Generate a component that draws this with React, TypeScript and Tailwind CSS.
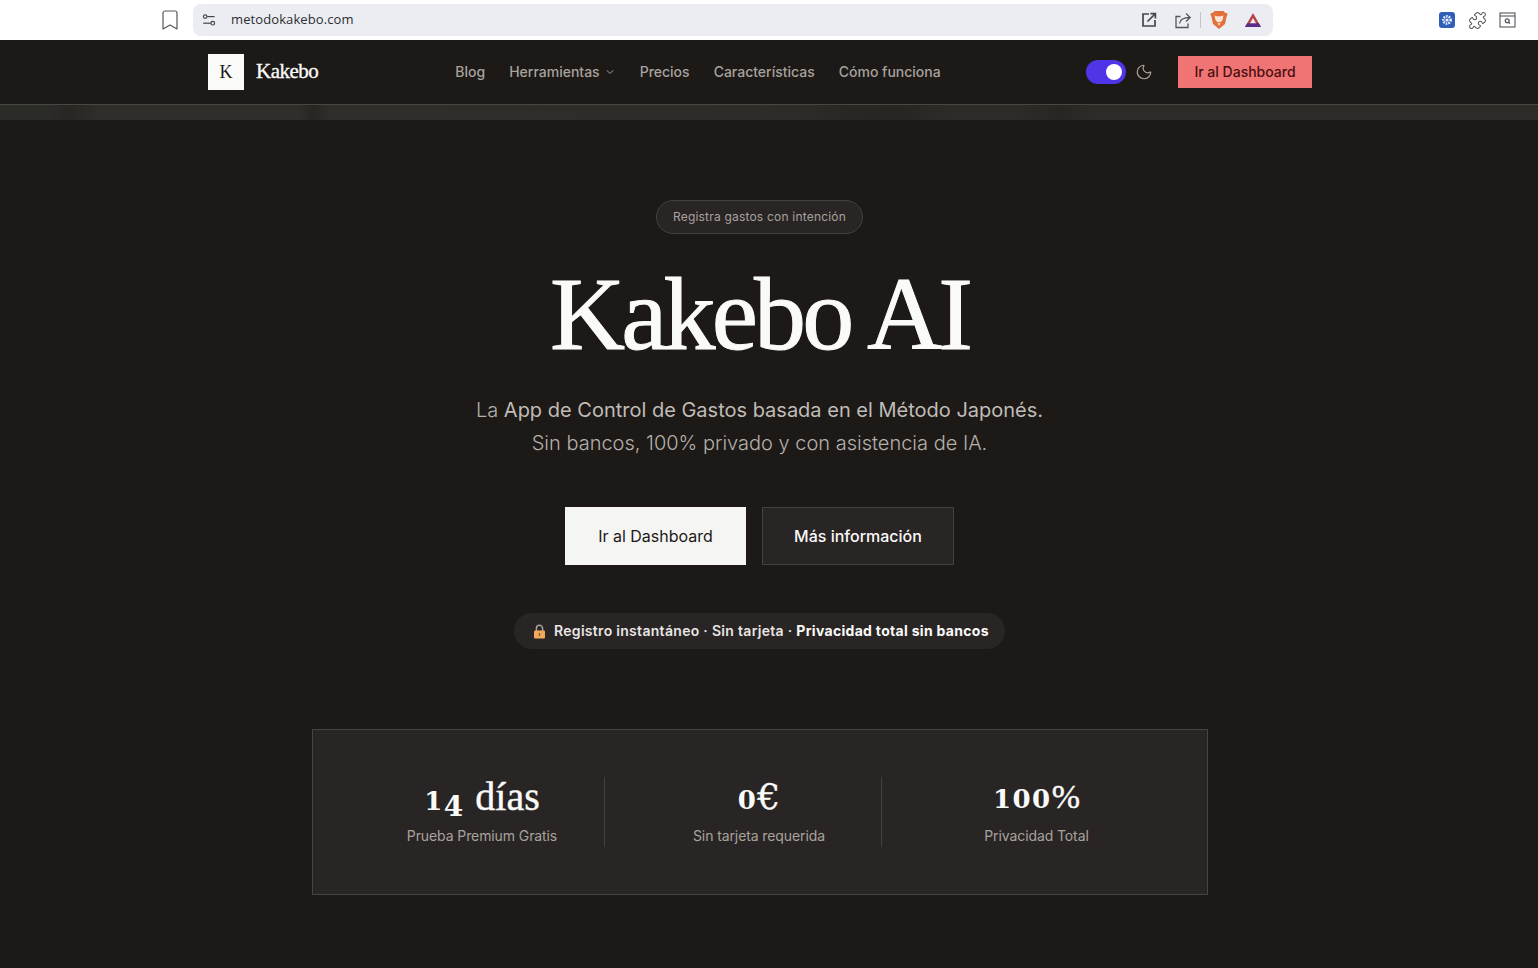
import { Bookmark, ChevronDown, Moon, Puzzle } from "lucide-react";
import type { ReactNode } from "react";

const navLinks = ["Blog", "Precios", "Características", "Cómo funciona"];

// Georgia-style old figures: the digits sit at x-height or drop under the baseline
function Low({ children }: { children: ReactNode }) {
  return <span className="font-['DejaVu_Serif',serif] text-[26px] font-bold tracking-[1.5px] [-webkit-text-stroke:0px]">{children}</span>;
}

const stats: { key: string; value: ReactNode; label: string }[] = [
  {
    key: "dias",
    value: (
      <>
        <Low>1</Low>
        <span className="relative top-[6px] font-['DejaVu_Serif',serif] text-[28px] font-bold leading-none [-webkit-text-stroke:0px]">4</span>
        <span className="ml-[2px]"> días</span>
      </>
    ),
    label: "Prueba Premium Gratis",
  },
  {
    key: "euro",
    value: (
      <>
        <Low>0</Low>
        <span className="font-['DejaVu_Serif',serif] text-[36px] [-webkit-text-stroke:0.3px_#fafaf9]">€</span>
      </>
    ),
    label: "Sin tarjeta requerida",
  },
  {
    key: "total",
    value: (
      <>
        <Low>100</Low>
        <span className="text-[34px]">%</span>
      </>
    ),
    label: "Privacidad Total",
  },
];

function BraveIcon() {
  return (
    <svg width="18" height="20" viewBox="0 0 18 20">
      <path d="M4.5 1 L13.5 1 L15 2.8 L17 3 L17.5 5 L16.5 7 L15 14 L9 19 L3 14 L1.5 7 L.5 5 L1 3 L3 2.8 Z" fill="#e2703a" />
      <path d="M4.6 5.6 L8 6.6 L9 6 L10 6.6 L13.4 5.6 L12.6 10 L10.2 12.4 L9 11.8 L7.8 12.4 L5.4 10 Z" fill="#fbe6d8" />
      <path d="M7.5 13.6 L9 12.9 L10.5 13.6 L9 15.6 Z" fill="#fbe6d8" />
    </svg>
  );
}

function PrismIcon() {
  return (
    <svg width="18" height="16" viewBox="0 0 18 16">
      <path d="M9 1 L17 15 L1 15 Z" fill="#b8434a" />
      <path d="M1 15 L17 15 L14.8 11.2 L3.2 11.2 Z" fill="#5b2c8a" />
      <path d="M9 6 L12 11.2 L6 11.2 Z" fill="#ecedf2" />
    </svg>
  );
}

function TuneIcon() {
  return (
    <svg width="14" height="14" viewBox="0 0 14 14" fill="none" stroke="#45474c" strokeWidth="1.2">
      <circle cx="3.2" cy="3.6" r="1.8" />
      <path d="M5.2 3.6 H12.6" />
      <circle cx="10.8" cy="10.2" r="1.8" />
      <path d="M1.2 10.2 H8.8" />
    </svg>
  );
}

function OpenIcon() {
  return (
    <svg width="16" height="16" viewBox="0 0 16 16" fill="none" stroke="#45474c" strokeWidth="1.7">
      <path d="M8 2 H2 V14 H14 V8" />
      <path d="M6.5 9.5 L14 2 M9.5 1.6 H14.4 V6.5" />
    </svg>
  );
}

function ShareIcon() {
  return (
    <svg width="17" height="17" viewBox="0 0 17 17" fill="none" stroke="#55575c" strokeWidth="1.3">
      <path d="M5.5 4.5 H1 V15.5 H13 V11.5" />
      <path d="M4.5 11.5 C5 7.5 8 5.5 15 5.5 M11 1.5 L15.2 5.5 L11 9.5" />
    </svg>
  );
}

function GearBadge() {
  return (
    <svg width="16" height="16" viewBox="0 0 16 16">
      <rect width="16" height="16" rx="3" fill="#2f5fb8" />
      <circle cx="8" cy="8" r="3.6" fill="none" stroke="#e8eefb" strokeWidth="2.6" strokeDasharray="1.6 1" />
      <circle cx="8" cy="8" r="1.6" fill="#e8eefb" />
    </svg>
  );
}

function TabSearchIcon() {
  return (
    <svg width="17" height="16" viewBox="0 0 17 16" fill="none" stroke="#55575c" strokeWidth="1.1">
      <rect x="1" y="1" width="15" height="14" />
      <path d="M1 4 H16" />
      <circle cx="8.2" cy="8.8" r="1.9" strokeWidth="1.3" />
      <path d="M9.6 10.2 L11 11.6" strokeWidth="1.3" />
    </svg>
  );
}

function LockIcon() {
  return (
    <svg width="13" height="15" viewBox="0 0 13 15">
      <path d="M3.4 7 V4.4 a3.1 3.1 0 0 1 6.2 0 V7" fill="none" stroke="#a8a29e" strokeWidth="1.5" />
      <rect x="1" y="6.4" width="11" height="8" rx="1.2" fill="#f0a95c" />
      <rect x="5.8" y="9" width="1.4" height="3" fill="#8a5a24" />
    </svg>
  );
}

function BrowserBar() {
  return (
    <div className="flex h-10 items-center bg-white pl-[158px] font-['Open_Sans',sans-serif]">
      <Bookmark className="h-6 w-6 text-[#55575c]" strokeWidth={1.2} />
      <div className="ml-[11px] flex h-[32px] w-[1080px] items-center rounded-lg bg-[#ecedf2] pl-[9px] pr-[11px]">
        <TuneIcon />
        <span className="ml-[15px] text-[13px] tracking-[0.1px] text-[#2c2d30]">metodokakebo.com</span>
        <div className="ml-auto flex">
          <OpenIcon />
        </div>
        <div className="ml-[18px] flex">
          <ShareIcon />
        </div>
        <div className="ml-[8px] h-[16px] w-px bg-[#c4c5cb]" />
        <div className="ml-[9px] flex">
          <BraveIcon />
        </div>
        <div className="ml-[16px] flex">
          <PrismIcon />
        </div>
      </div>
      <div className="ml-[166px] flex">
        <GearBadge />
      </div>
      <Puzzle className="ml-[13px] h-[19px] w-[19px] text-[#55575c]" strokeWidth={1.3} />
      <div className="ml-[12px] flex">
        <TabSearchIcon />
      </div>
    </div>
  );
}

function Nav() {
  return (
    <header className="border-b border-[#4a4642] bg-[#1c1917] pr-[18px]">
      <div className="mx-auto flex h-16 w-[1104px] items-center">
        <div className="flex h-9 w-9 items-center justify-center bg-[#fafaf9] font-['Liberation_Serif',serif] text-[18px] text-[#1c1917]">
          K
        </div>
        <span className="ml-3 font-['Liberation_Serif',serif] text-[21px] font-medium tracking-[-0.5px] text-[#fafaf9] [-webkit-text-stroke:0.35px_#fafaf9]">
          Kakebo
        </span>
        <nav className="ml-[137px] flex items-center gap-6 text-sm font-medium text-[#a8a29e]">
          <a>{navLinks[0]}</a>
          <a className="flex items-center gap-1">
            Herramientas <ChevronDown className="h-3 w-3" />
          </a>
          {navLinks.slice(1).map((link) => (
            <a key={link}>{link}</a>
          ))}
        </nav>
        <div className="ml-auto flex items-center">
          <div className="flex h-6 w-10 items-center justify-end rounded-full bg-[#4f35e8] pr-1">
            <div className="h-4 w-4 rounded-full bg-white" />
          </div>
          <Moon className="ml-[9px] h-[18px] w-[18px] text-[#a8a29e]" strokeWidth={1.6} />
          <button className="ml-[25px] h-8 w-[134px] bg-[#f07474] text-sm font-medium text-[#4a0f10]">
            Ir al Dashboard
          </button>
        </div>
      </div>
    </header>
  );
}

function Hero() {
  return (
    <section className="flex flex-col items-center pt-[80px] pr-[19px]">
      <div className="flex h-[34px] items-center rounded-full border border-[#44403c] bg-[#292524] px-4 text-xs tracking-[0.2px] text-[#a8a29e]">
        Registra gastos con intención
      </div>
      <h1 className="mt-[22px] font-['Liberation_Serif',serif] text-[104px] font-normal leading-[116px] tracking-[-3.8px] text-[#fafaf9] [-webkit-text-stroke:1px_#fafaf9]">
        Kakebo AI
      </h1>
      <p className="mt-[22px] text-center text-[20px] font-light leading-[33px] text-[#b5b0ab]">
        La <span className="font-normal text-[#c0bcb7]">App de Control de Gastos basada en el Método Japonés.</span>
        <br />
        Sin bancos, 100% privado y con asistencia de IA.
      </p>
      <div className="mt-[47px] flex gap-4">
        <button className="h-[58px] w-[181px] bg-[#f5f5f4] text-base text-[#1c1917]">Ir al Dashboard</button>
        <button className="h-[58px] w-[192px] border border-[#44403c] bg-[#292524] text-base font-medium text-[#fafaf9]">
          Más información
        </button>
      </div>
      <div className="mt-[48px] flex h-9 w-[491px] items-center gap-2 rounded-full bg-[#292524] pl-[19px] text-sm font-semibold tracking-[0.3px] text-[#e7e5e4]">
        <LockIcon />
        <span>
          Registro instantáneo · Sin tarjeta · <strong className="font-bold text-[#fafaf9]">Privacidad total sin bancos</strong>
        </span>
      </div>
    </section>
  );
}

function Stats() {
  return (
    <div className="pr-[18px]">
      <section className="mx-auto mt-[80px] grid h-[166px] w-[896px] grid-cols-3 items-center gap-8 border border-[#47433f] bg-[#292524] pl-[47px] pr-[48px]">
        {stats.map((stat, i) => (
          <div
            key={stat.key}
            className={`flex h-[70px] flex-col items-center justify-start ${i < 2 ? "border-r border-[#44403c]" : ""}`}
          >
            <div className="flex h-[40px] items-baseline whitespace-pre font-['Liberation_Serif',serif] text-[40px] leading-[40px] text-[#fafaf9] [-webkit-text-stroke:0.4px_#fafaf9]">
              {stat.value}
            </div>
            <div className="mt-[9px] text-sm tracking-[-0.1px] text-[#a8a29e]">{stat.label}</div>
          </div>
        ))}
      </section>
    </div>
  );
}

export default function App() {
  return (
    <div className="h-[968px] overflow-hidden bg-[#1c1917] font-['Inter',sans-serif]">
      <BrowserBar />
      <Nav />
      <div className="h-[15px] bg-[linear-gradient(90deg,#2b2b28_0px,#2b2b28_50px,#292624_70px,#302d2a_100px,#302d2a_300px,#282522_312px,#302d2a_330px,#2e2b28_800px,#292624_850px,#282522_905px,#2e2b28_950px,#2e2b28_1015px,#282522_1060px,#2e2b28_1100px,#2e2b28_1538px)]" />
      <Hero />
      <Stats />
    </div>
  );
}
